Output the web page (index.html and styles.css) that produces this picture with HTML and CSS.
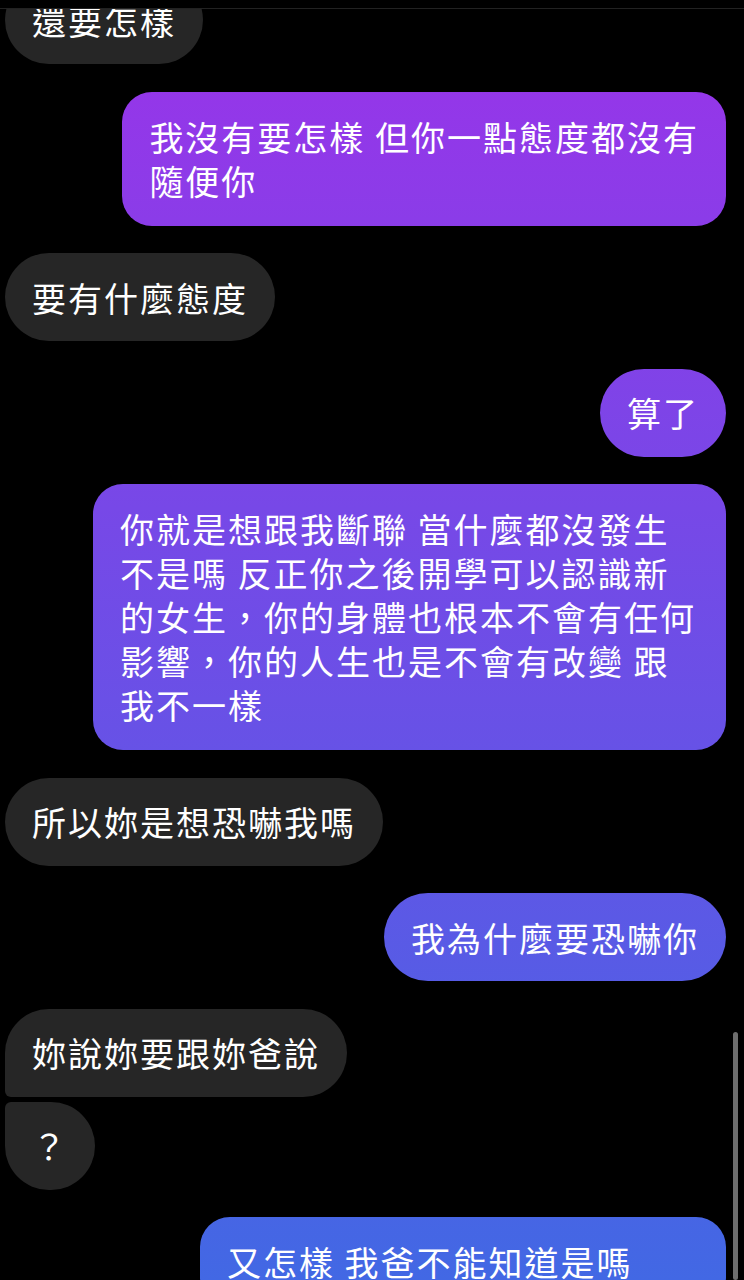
FILE: index.html
```html
<!DOCTYPE html>
<html lang="zh-Hant">
<head>
    <meta charset="UTF-8">
    <meta name="viewport" content="width=device-width, initial-scale=1.0">
    <title>Chat</title>
    <link rel="stylesheet" href="styles.css">
</head>
<body>

    <!-- top edge of the conversation view -->
    <div class="topbar"></div>

    <div class="chat">
        <div class="thread">
            <div class="msg in">還要怎樣</div>
            <div class="msg out long">我沒有要怎樣 但你一點態度都沒有<br>隨便你</div>
            <div class="msg in">要有什麼態度</div>
            <div class="msg out">算了</div>
            <div class="msg out long">你就是想跟我斷聯 當什麼都沒發生 不是嗎 反正你之後開學可以認識新的女生，你的身體也根本不會有任何影響，你的人生也是不會有改變 跟我不一樣</div>
            <div class="msg in">所以妳是想恐嚇我嗎</div>
            <div class="msg out">我為什麼要恐嚇你</div>
            <div class="msg in group-first">妳說妳要跟妳爸說</div>
            <div class="msg in group-last">？</div>
            <div class="msg out long cut">又怎樣 我爸不能知道是嗎</div>
        </div>
    </div>

    <div class="scrollbar"></div>

</body>
</html>
```

FILE: styles.css
```css
/* CSS */
body {
    margin: 0;
    padding: 0;
    height: 1280px;
    overflow: hidden;
    background-color: #000;
    color: #fff;
    font-family: "Noto Sans CJK TC", "Noto Sans", sans-serif;
    position: relative;
}

.topbar {
    height: 8px;
    background-color: #000;
    border-bottom: 1px solid #222;
    position: relative;
    z-index: 2;
}

.chat {
    height: 1271px;
    overflow: hidden;
    padding: 0 18px 0 5px;
}

/* list is scrolled: first bubble sits partly under the top edge */
.thread {
    display: flex;
    flex-direction: column;
    margin-top: -33px;
}

.msg {
    box-sizing: border-box;
    max-width: 633px;
    padding: 21.5px 27px;
    font-size: 34px;
    line-height: 45px;
    letter-spacing: 2px;
    border-radius: 44px;
    margin-top: 27.5px;
}

.msg:first-child {
    margin-top: 0;
}

.msg.in {
    align-self: flex-start;
    background-color: #262626;
}

.msg.out {
    align-self: flex-end;
    background: linear-gradient(180deg, #9a33e9 0, #4268e4 1280px);
    background-attachment: fixed;
}

.msg.long {
    padding-top: 23px;
    padding-bottom: 23px;
    line-height: 44px;
    border-radius: 30px;
}

.msg.cut {
    width: 526px;
}

.msg.group-first {
    border-bottom-left-radius: 6px;
}

.msg.group-last {
    margin-top: 5px;
    border-top-left-radius: 6px;
}

.scrollbar {
    position: absolute;
    right: 6px;
    top: 1032px;
    bottom: 0;
    width: 5px;
    border-radius: 3px;
    background-color: #6e6e6e;
}
```
